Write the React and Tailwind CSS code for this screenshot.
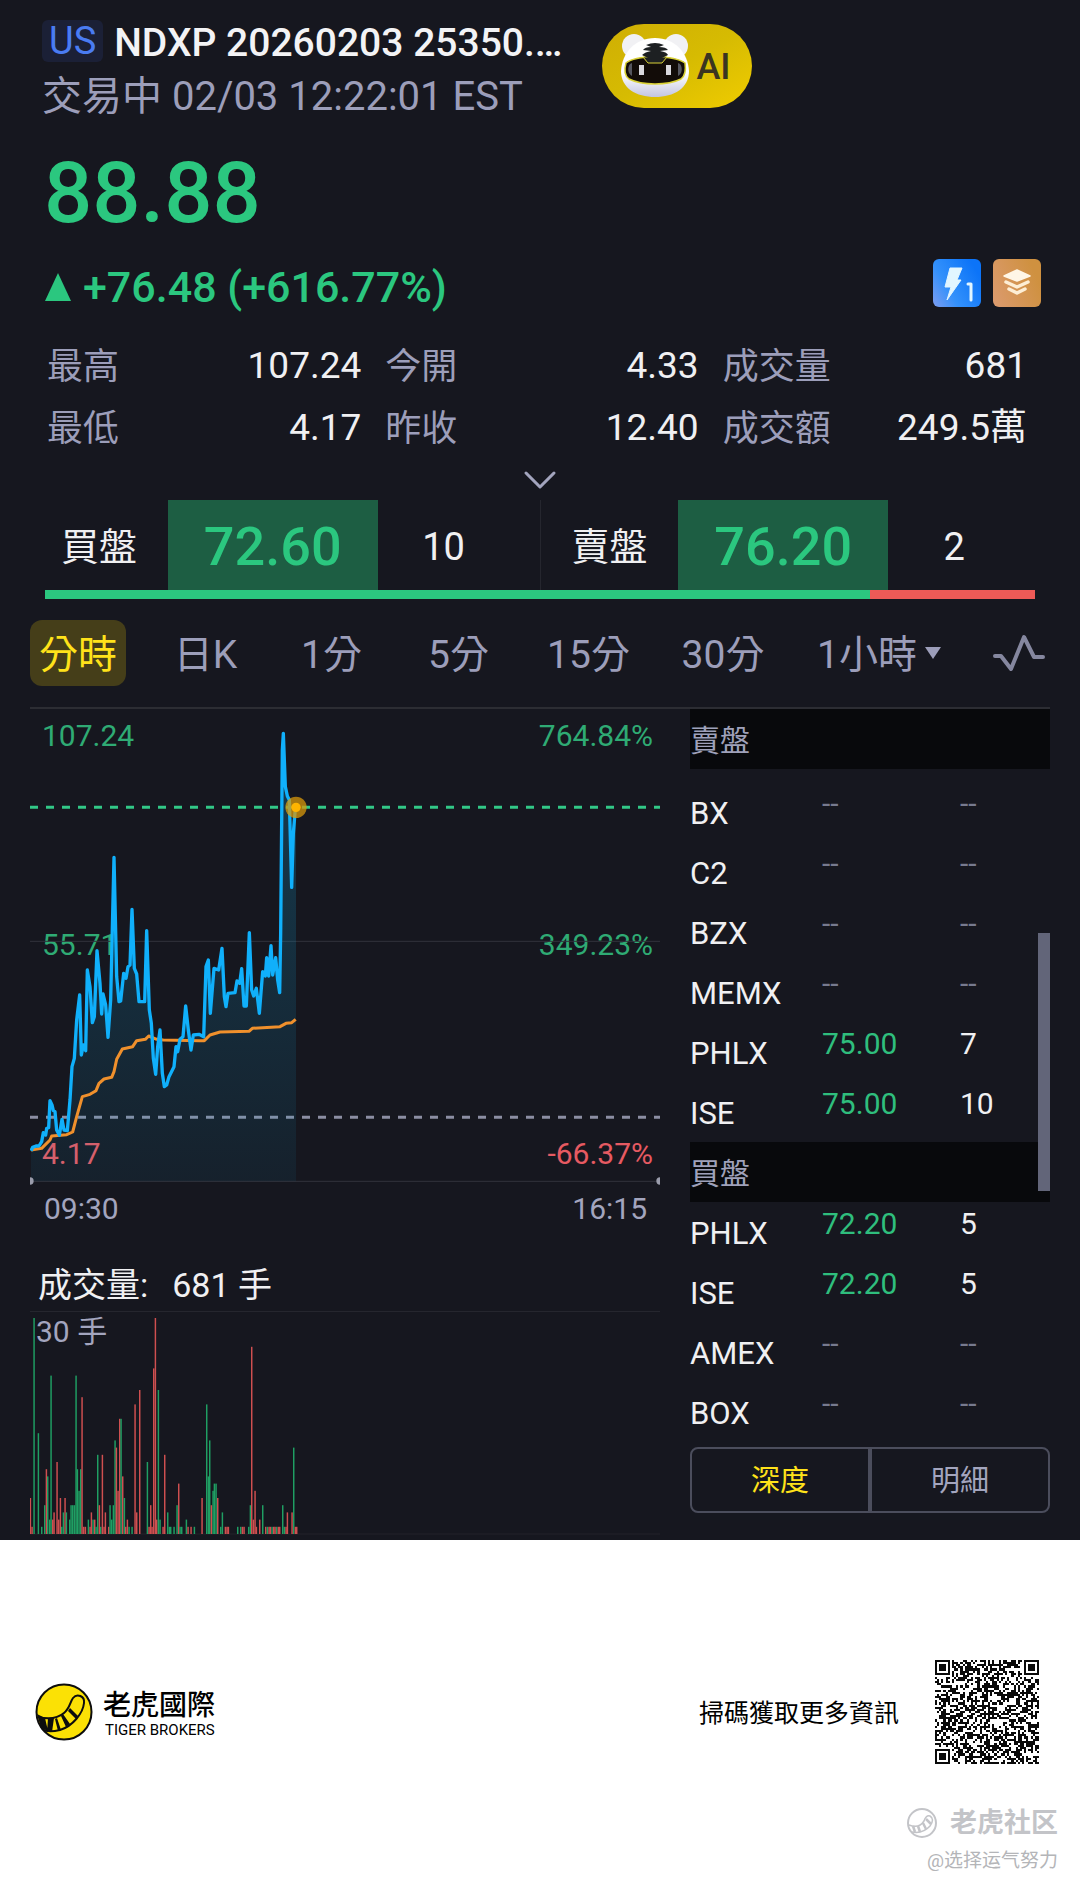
import { ChevronDown } from "lucide-react";

const stats = [
  ["最高", "107.24"],
  ["今開", "4.33"],
  ["成交量", "681"],
  ["最低", "4.17"],
  ["昨收", "12.40"],
  ["成交額", "249.5萬"],
];

const tabs = ["分時", "日K", "1分", "5分", "15分", "30分"];

const asks = [
  ["BX"],
  ["C2"],
  ["BZX"],
  ["MEMX"],
  ["PHLX", "75.00", "7"],
  ["ISE", "75.00", "10"],
];

const bids = [
  ["PHLX", "72.20", "5"],
  ["ISE", "72.20", "5"],
  ["AMEX"],
  ["BOX"],
];

const pricePoints =
  "93,1352 98,1342 108,1338 117,1338 125,1325 130,1298 137,1305 140,1285 146,1283 150,1202 156,1215 160,1232 165,1235 170,1290 178,1306 186,1258 192,1290 202,1292 210,1200 216,1100 223,1075 230,960 239,885 244,1065 250,1035 257,1052 262,810 270,860 277,968 283,950 291,752 300,850 305,942 309,882 317,915 324,1012 332,900 342,472 350,830 357,905 362,903 371,820 378,835 384,800 390,795 396,628 403,805 410,822 417,905 434,905 440,692 448,930 454,970 460,1075 467,1123 473,1040 480,990 487,1120 493,1160 500,1155 507,1130 522,1100 528,1040 533,1055 540,1018 549,1010 557,918 565,990 573,1050 580,1005 597,1003 611,1010 618,800 625,780 631,940 642,805 656,810 666,745 673,890 678,920 684,880 705,878 711,843 719,850 725,806 732,918 739,918 748,698 755,870 761,888 769,865 778,940 788,815 796,828 800,773 806,828 813,737 818,825 827,773 833,840 839,878 842,700 847,150 850,100 856,260 862,288 868,300 875,562 880,400 886,325";

const averagePoints =
  "93,1350 125,1345 150,1320 155,1308 200,1304 218,1296 230,1250 247,1190 270,1183 288,1172 297,1150 312,1137 335,1132 342,1115 350,1078 367,1047 398,1040 410,1022 436,1018 446,1008 470,1018 490,1020 600,1022 613,1022 630,1005 660,996 747,994 757,985 840,980 858,970 875,968 887,958";

// x position, lots traded, r = down / g = up
const volumes =
  "91 5 r,96 1 r,102 30 g,115 14 g,125 1 g,134 4 g,139 9 r,143 8 g,149 2 g,153 22 g,158 2 r,162 3 r,171 10 r,176 2 r,181 5 r,185 1 g,190 3 g,195 5 r,199 3 g,209 2 g,213 4 g,218 4 g,223 4 g,228 22 g,232 9 g,237 6 g,242 9 g,246 19 r,251 1 r,256 1 r,265 2 g,270 1 r,274 3 r,279 2 g,284 2 r,288 1 g,293 11 g,298 4 r,302 1 g,307 11 r,312 1 r,316 3 r,326 1 r,330 4 g,335 2 g,340 4 g,345 13 g,349 12 r,354 6 r,359 16 r,363 16 g,368 8 r,373 5 g,377 1 r,382 2 r,387 1 g,396 1 g,405 18 r,410 3 r,419 20 r,442 10 g,447 1 r,452 4 r,456 1 r,461 23 r,466 30 r,470 2 r,475 20 g,480 2 g,489 1 r,494 11 r,503 3 g,508 1 g,512 1 g,522 1 g,531 4 g,536 7 r,540 1 g,545 1 g,559 2 g,564 1 r,573 1 r,583 1 g,606 5 r,620 18 g,625 8 g,629 13 g,634 4 r,639 6 g,643 7 g,648 7 g,653 5 r,662 1 g,667 3 g,676 1 r,681 1 r,685 1 r,713 1 g,722 1 g,727 1 r,732 1 r,746 1 g,751 4 g,755 26 r,760 2 r,765 6 r,769 1 r,779 2 r,788 4 g,797 1 r,802 1 g,807 1 r,811 1 r,816 1 g,821 1 r,825 1 r,830 1 g,835 1 r,839 1 r,848 4 g,853 1 g,858 1 r,862 3 r,876 3 r,881 12 g,886 1 r,890 1 r"
    .split(",")
    .map((item) => {
      const [x, lots, side] = item.split(" ");
      return { x: Number(x), lots: Number(lots), side };
    });

const AiButton = () => (
  <button
    type="button"
    className="ml-10 flex h-[84px] w-[150px] items-center rounded-full bg-linear-to-br from-[#cfae04] via-[#d6bb02] to-[#f0cc00] pl-4 text-[36px] font-medium text-[#3a3420]"
  >
    <svg viewBox="0 0 74 66" className="mr-1 h-[66px] w-[74px]" aria-hidden="true">
      <defs>
        <linearGradient id="face" x1="0" y1="0" x2="0" y2="1">
          <stop offset="0.6" stopColor="#ffffff" />
          <stop offset="1" stopColor="#c3c5e0" />
        </linearGradient>
      </defs>
      <circle cx="16" cy="13" r="12" fill="#f1f1f4" />
      <circle cx="58" cy="13" r="12" fill="#f1f1f4" />
      <path
        d="M37 5C57 5 70 20 71 38C71 55 56 64 37 64C18 64 3 55 3 38C4 20 17 5 37 5Z"
        fill="url(#face)"
      />
      <path
        d="M8 30C14 25 24 24 37 24C50 24 60 25 67 30C68 37 67 43 63 46C55 50 46 51 37 51C28 51 19 50 11 46C7 43 6 37 8 30Z"
        fill="#120c08"
        stroke="#d9d136"
        strokeWidth="1.5"
      />
      <path d="M12 31C9 35 10 41 14 43V30Z" fill="#55565e" />
      <path d="M62 31C65 35 64 41 60 43V30Z" fill="#55565e" />
      <path
        d="M25 24H49L44 30H30Z"
        fill="#1d2022"
        stroke="#d9d136"
        strokeWidth="1"
      />
      <path
        d="M28 12Q37 8 46 12L41 14Q48 14 50 17L42 18Q49 19 50 22L44 25H30L24 22Q27 19 33 18L25 17Q27 14 33 14Z"
        fill="#1d2022"
      />
      <rect x="21" y="32" width="5" height="10" fill="#d9d9de" />
      <rect x="48" y="32" width="5" height="10" fill="#d9d9de" />
    </svg>
    <span className="pt-[2px]">AI</span>
  </button>
);

const FlashBadge = () => (
  <svg viewBox="0 0 48 48" className="size-12" role="img" aria-label="Level 1">
    <defs>
      <linearGradient id="flash" x1="0" y1="1" x2="1" y2="0.4">
        <stop offset="0" stopColor="#7d9df0" />
        <stop offset="0.4" stopColor="#3391fb" />
        <stop offset="1" stopColor="#0c74f8" />
      </linearGradient>
    </defs>
    <rect width="48" height="48" rx="6" fill="url(#flash)" />
    <path
      d="M17 9H29L24 21H28L14 41L18 28H12Z"
      fill="#e2f6ff"
      stroke="#e2f6ff"
      strokeWidth="1"
      strokeLinejoin="round"
    />
    <path
      d="M35 25H38V41"
      fill="none"
      stroke="#e2f6ff"
      strokeWidth="3"
      strokeLinecap="round"
      strokeLinejoin="round"
    />
  </svg>
);

const LayersBadge = () => (
  <svg viewBox="0 0 48 48" className="size-12" role="img" aria-label="Depth">
    <defs>
      <linearGradient id="layers" x1="0" y1="1" x2="1" y2="0.6">
        <stop offset="0" stopColor="#dc9b70" />
        <stop offset="1" stopColor="#cf9140" />
      </linearGradient>
    </defs>
    <rect width="48" height="48" rx="6" fill="url(#layers)" />
    <path
      d="M24 11L37 17L24 22L11 17Z"
      fill="#fff6e6"
      stroke="#fff6e6"
      strokeWidth="1.5"
      strokeLinejoin="round"
    />
    <path
      d="M13 23L24 28L35 23M16 30L24 34L32 30"
      fill="none"
      stroke="#fdeed5"
      strokeWidth="3.5"
      strokeLinecap="round"
      strokeLinejoin="round"
    />
  </svg>
);

const QuoteSide = ({ label, price, size, divided }) => (
  <div
    className={`grid flex-1 grid-cols-[138fr_210fr_132fr_30fr] items-center text-center text-[38px] text-[#f0f0f2] ${
      divided ? "border-r border-[#25262e]" : ""
    }`}
  >
    <span className="pt-1">{label}</span>
    <span className="bg-[#1d5e43] pt-[3px] text-[54px] leading-[87px] font-medium text-[#2bc77f]">
      {price}
    </span>
    <span className="pt-1">{size}</span>
  </div>
);

const PriceChart = () => (
  <div className="relative text-[30px] leading-8">
    <span className="absolute top-[11px] left-3 text-[#2fab74]">107.24</span>
    <span className="absolute top-[11px] right-[7px] text-[#2fab74]">764.84%</span>
    <span className="absolute top-[220px] left-3 text-[#2fab74]">55.71</span>
    <span className="absolute top-[220px] right-[7px] text-[#2fab74]">349.23%</span>
    <span className="absolute top-[429px] left-3 text-[#e65a62]">4.17</span>
    <span className="absolute top-[429px] right-[7px] text-[#e65a62]">-66.37%</span>
    <svg
      viewBox="90 27 1890 1434"
      preserveAspectRatio="none"
      className="relative block h-[478px] w-full"
      role="img"
      aria-label="分時走勢"
    >
      <defs>
        <linearGradient id="area" x1="0" y1="0" x2="0" y2="1">
          <stop offset="0" stopColor="#12a5dc" stopOpacity="0.26" />
          <stop offset="1" stopColor="#12a5dc" stopOpacity="0.07" />
        </linearGradient>
      </defs>
      <path d="M90 724H1980M90 1444H1980" stroke="#32333b" strokeWidth="3" />
      <path d="M90 322H1980" stroke="#32c887" strokeWidth="9" strokeDasharray="24 24" />
      <path d="M90 1252H1980" stroke="#8c8ea3" strokeWidth="9" strokeDasharray="24 24" />
      <polygon points={`93,1444 ${pricePoints} 888,325 888,1444`} fill="url(#area)" />
      <polyline
        points={averagePoints}
        fill="none"
        stroke="#f0902c"
        strokeWidth="9"
        strokeLinejoin="round"
      />
      <polyline
        points={pricePoints}
        fill="none"
        stroke="#10b0fb"
        strokeWidth="10"
        strokeLinejoin="round"
      />
      <circle cx="888" cy="322" r="32" fill="#d99a0b" fillOpacity="0.75" />
      <circle cx="888" cy="322" r="14" fill="#ffb400" />
      <circle cx="90" cy="1443" r="11" fill="#9a9cab" />
      <circle cx="1980" cy="1443" r="11" fill="#9a9cab" />
    </svg>
    <div className="flex h-[42px] items-center justify-between pt-[2px] pr-[13px] pl-[14px] text-[#a3a5be]">
      <span>09:30</span>
      <span>16:15</span>
    </div>
  </div>
);

const VolumeChart = () => (
  <div className="mt-[31px]">
    <p className="flex gap-6 border-b border-[#25262e] pl-2 text-[34px] leading-[51px] text-[#f0f0f2]">
      <span>成交量:</span>
      <span>681 手</span>
    </p>
    <div className="relative">
      <span className="absolute top-1 left-[6px] text-[30px] leading-8 text-[#a3a5be]">30 手</span>
      <svg
        viewBox="90 156 1890 684"
        preserveAspectRatio="none"
        className="relative block h-[228px] w-full"
        role="img"
        aria-label="成交量"
      >
        <path d="M90 822H1980" stroke="#22232b" strokeWidth="3" />
        {volumes.map(({ x, lots, side }) => (
          <rect
            key={x}
            x={x - 2}
            y={822 - lots * 21.6}
            width="4.4"
            height={lots * 21.6}
            fill={side === "r" ? "#cf4f50" : "#1f9f63"}
          />
        ))}
      </svg>
    </div>
  </div>
);

const DepthHeader = ({ children }) => (
  <tr className="h-[60px] bg-[#08090c]">
    <th colSpan={3} className="pt-1 text-left text-[30px] font-normal text-[#9fa1ba]">
      {children}
    </th>
  </tr>
);

const DepthRow = ({ row: [venue, price, size] }) => (
  <tr className="h-[60px]">
    <th scope="row" className="pt-1 text-left text-[31px] font-normal text-[#f0f0f2]">
      {venue}
    </th>
    <td className={price ? "pb-4 text-[#2fbe7d]" : "pb-4 text-[#777a8e]"}>{price || "--"}</td>
    <td className={size ? "pb-4 text-[#f0f0f2]" : "pb-4 text-[#777a8e]"}>{size || "--"}</td>
  </tr>
);

const DepthPanel = () => (
  <div>
    <div className="relative">
      <table className="w-full table-fixed text-[30px] leading-8">
        <colgroup>
          <col className="w-[132px]" />
          <col className="w-[138px]" />
          <col />
        </colgroup>
        <tbody>
          <DepthHeader>賣盤</DepthHeader>
          <tr className="h-[13px]" />
          {asks.map((row) => (
            <DepthRow key={row[0]} row={row} />
          ))}
          <DepthHeader>買盤</DepthHeader>
          {bids.map((row) => (
            <DepthRow key={row[0]} row={row} />
          ))}
        </tbody>
      </table>
      <div className="absolute top-[224px] right-0 h-[258px] w-3 bg-[#626579]" />
    </div>
    <div className="mt-[5px] flex h-[66px] divide-x-4 divide-[#4b4d5c] rounded-lg border-2 border-[#4b4d5c] text-[29px]">
      <button type="button" className="flex-1 pt-1 text-[#ffe21a]">
        深度
      </button>
      <button type="button" className="flex-1 pt-1 text-[#a3a5be]">
        明細
      </button>
    </div>
  </div>
);

const TigerLogo = () => (
  <svg viewBox="0 0 58 58" className="size-[58px]" aria-hidden="true">
    <circle cx="29" cy="29" r="27.5" fill="#fbe105" stroke="#0d0d0d" strokeWidth="2" />
    <path
      d="M3 34C12 36 22 36 29 30C35 25 35 19 38 15C42 10 50 13 49 20C48 30 38 43 25 47C17 49 11 49 7 46"
      fill="none"
      stroke="#0d0d0d"
      strokeWidth="2"
    />
    <path d="M2 31L10 35L13 48L6 45ZM13 35L19 35L17 49L12 49ZM22 35L26 47L23 48L20 36ZM28 31L35 41L31 44L26 33ZM35 25L43 33L41 36L33 28Z" fill="#0d0d0d" />
  </svg>
);

const QR_SIZE = 49;

const finderCell = (x, y) => {
  const corners = [
    [0, 0],
    [QR_SIZE - 7, 0],
    [0, QR_SIZE - 7],
  ];
  for (const [cx, cy] of corners) {
    const d = Math.max(Math.abs(x - cx - 3), Math.abs(y - cy - 3));
    if (d <= 4) return d === 3 || d <= 1;
  }
  return null;
};

const buildQrPath = () => {
  let seed = 20260203;
  let path = "";
  for (let y = 0; y < QR_SIZE; y++) {
    for (let x = 0; x < QR_SIZE; x++) {
      seed = (seed * 1103515245 + 12345) % 2147483648;
      const finder = finderCell(x, y);
      const on = finder === null ? seed / 2147483648 > 0.48 : finder;
      if (on) path += `M${x} ${y}h1v1h-1z`;
    }
  }
  return path;
};

const qrPath = buildQrPath();

const Footer = () => (
  <footer className="bg-white text-black">
    <div className="flex items-center pt-[120px] pr-[41px] pl-[35px]">
      <TigerLogo />
      <div className="ml-[10px] pt-[3px]">
        <p className="text-[28px] leading-8 font-medium">老虎國際</p>
        <p className="pl-[2px] text-[15px] leading-4">TIGER BROKERS</p>
      </div>
      <p className="mr-9 ml-auto pt-1 text-[25px]">掃碼獲取更多資訊</p>
      <svg
        viewBox={`0 0 ${QR_SIZE} ${QR_SIZE}`}
        className="size-[104px]"
        shapeRendering="crispEdges"
        role="img"
        aria-label="QR code"
      >
        <path d={qrPath} fill="#0a0a0a" />
      </svg>
    </div>
    <div className="flex flex-col items-end pt-[39px] pr-[22px] pb-2 font-['Roboto','Noto_Sans_CJK_SC',sans-serif] text-[#c3c4c8]">
      <p className="flex items-center gap-3 text-[27px] leading-10 font-bold">
        <svg viewBox="0 0 32 32" className="size-8" fill="none" stroke="#c3c4c8" aria-hidden="true">
          <circle cx="16" cy="16" r="14" strokeWidth="2" />
          <path d="M3 18Q13 22 18 14Q20 8 24 9Q29 12 24 19Q17 27 6 25" strokeWidth="1.5" />
          <path d="M7 19L9 25M12 19L14 25M17 16L20 22M20 12L25 17" strokeWidth="2.5" />
        </svg>
        老虎社区
      </p>
      <p className="text-[19px] leading-9 text-[#b4b5b8]">@选择运气努力</p>
    </div>
  </footer>
);

const App = () => {
  return (
    <div className="min-h-screen bg-white font-['Roboto','Noto_Sans_CJK_TC',sans-serif]">
      <main className="bg-[#16171f]">
        <header className="flex items-start pt-5 pl-[42px]">
          <div>
            <h1 className="flex h-[46px] items-center gap-[11px] text-[39px] font-medium text-[#f3f3f5]">
              <span className="mb-1 rounded-md bg-[#1b2036] px-[7px] text-[38px] leading-[42px] font-normal text-[#4a7cf2]">
                US
              </span>
              NDXP 20260203 25350.…
            </h1>
            <p className="mt-[7px] text-[40px] leading-[48px] text-[#9c9eba]">
              交易中 02/03 12:22:01 EST
            </p>
          </div>
          <div className="pt-1">
            <AiButton />
          </div>
        </header>

        <p className="mt-[22px] pl-11 text-[85px] leading-[100px] font-medium text-[#2bc77f]">
          88.88
        </p>
        <div className="mt-4 flex h-14 items-center pr-[39px] pl-[45px] text-[#2bc77f]">
          <svg viewBox="0 0 26 28" className="mr-3 h-7 w-[26px]" aria-hidden="true">
            <path d="M13 0L26 28H0Z" fill="currentColor" />
          </svg>
          <span className="text-[43px] font-medium">+76.48 (+616.77%)</span>
          <div className="mb-2 ml-auto flex gap-3">
            <FlashBadge />
            <LayersBadge />
          </div>
        </div>

        <dl className="mt-5 grid grid-cols-[315fr_314fr_305fr] gap-x-6 pr-[53px] pl-[47px]">
          {stats.map(([label, value]) => (
            <div key={label} className="flex h-[62px] items-center justify-between">
              <dt className="pt-[2px] text-[36px] text-[#9c9eba]">{label}</dt>
              <dd className="text-[37px] text-[#f0f0f2]">{value}</dd>
            </div>
          ))}
        </dl>

        <button
          type="button"
          aria-label="展開"
          className="flex h-[41px] w-full items-center justify-center text-[#a3a5be]"
        >
          <ChevronDown className="size-14" strokeWidth={1.3} />
        </button>

        <div className="flex px-[30px]">
          <QuoteSide label="買盤" price="72.60" size="10" divided />
          <QuoteSide label="賣盤" price="76.20" size="2" />
        </div>
        <div className="mx-[45px] flex h-[9px]">
          <div className="w-5/6 bg-[#2bc77f]" />
          <div className="flex-1 bg-[#ee5a57]" />
        </div>

        <nav className="mt-[21px] grid h-[66px] grid-cols-[128fr_127fr_125fr_129fr_131fr_138fr_174fr_98fr] items-center justify-items-center pr-4 pl-[14px] text-[39px] leading-[62px] text-[#9c9eba]">
          {tabs.map((tab, i) => (
            <button
              key={tab}
              type="button"
              className={i === 0 ? "rounded-xl bg-[#453e19] px-[9px] pt-1 text-[#ffe21a]" : "pt-1"}
            >
              {tab}
            </button>
          ))}
          <button type="button" className="flex items-center gap-2 pt-1">
            1小時
            <svg viewBox="0 0 16 12" className="mb-1 h-3 w-4" aria-hidden="true">
              <path d="M0 0H16L8 12Z" fill="currentColor" />
            </svg>
          </button>
          <button type="button" aria-label="指標" className="justify-self-end pr-[18px]">
            <svg viewBox="0 0 54 38" className="h-[38px] w-[54px]" fill="none" aria-hidden="true">
              <path
                d="M3 22H9L19 35L32 3L42 23H51"
                stroke="#85879f"
                strokeWidth="4"
                strokeLinecap="round"
                strokeLinejoin="round"
              />
            </svg>
          </button>
        </nav>

        <section className="mx-[30px] mt-[21px] grid grid-cols-[7fr_4fr] gap-[30px] border-t-2 border-[#2c2d33]">
          <div>
            <PriceChart />
            <VolumeChart />
          </div>
          <DepthPanel />
        </section>
      </main>
      <Footer />
    </div>
  );
};

export default App;
